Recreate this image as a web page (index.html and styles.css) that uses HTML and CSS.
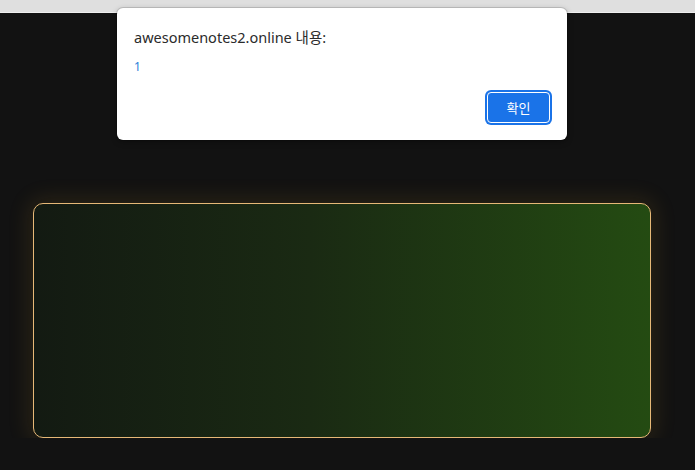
FILE: index.html
```html
<!DOCTYPE html>
<html lang="ko">
<head>
<meta charset="utf-8">
<link rel="stylesheet" href="styles.css">
</head>
<body>
<div class="topbar"></div>
<main class="page">
  <section class="card"></section>
</main>
<div class="dialog" role="alertdialog">
  <div class="dialog-title">awesomenotes2.online 내용:</div>
  <div class="dialog-msg">1</div>
  <div class="dialog-actions">
    <button class="btn-ok">확인</button>
  </div>
</div>
</body>
</html>
```
FILE: styles.css
```css
html, body {
  margin: 0;
  padding: 0;
  background: #121212;
  font-family: "Noto Sans", "Noto Sans CJK KR", sans-serif;
}
.topbar {
  height: 12px;
  background: #dfdfdf;
  border-bottom: 1px solid #efefef;
}
.page {
  padding: 190px 0 0 33px;
}
.card {
  box-sizing: border-box;
  width: 618px;
  height: 235px;
  border: 1px solid #e6b877;
  border-radius: 10px;
  background: linear-gradient(to right, #131a12 0%, #1a2a13 45%, #244b12 100%);
  box-shadow: 0 0 22px 4px rgba(200, 150, 40, 0.14);
}
.dialog {
  position: absolute;
  left: 117px;
  top: 8px;
  box-sizing: border-box;
  width: 450px;
  height: 132px;
  background: #fff;
  border-radius: 6px;
  box-shadow: 0 0 0 1px rgba(0,0,0,0.12), 0 2px 6px rgba(0,0,0,0.3);
  padding: 18px 17px 0 17px;
  display: flex;
  flex-direction: column;
}
.dialog-title {
  font-size: 14.5px;
  line-height: 22px;
  color: #2b2b2b;
}
.dialog-msg {
  margin-top: 11px;
  font-size: 12px;
  line-height: 16px;
  color: #2a7fd8;
}
.dialog-actions {
  display: flex;
  justify-content: flex-end;
  margin-top: 17px;
}
.btn-ok {
  box-sizing: border-box;
  width: 63px;
  height: 31px;
  background: #1a73e8;
  color: #fff;
  border: 1px solid #fff;
  border-radius: 4px;
  font-family: "Noto Sans CJK KR", sans-serif;
  font-size: 13px;
  padding: 0;
  box-shadow: 0 0 0 2px #1a73e8;
}
```
